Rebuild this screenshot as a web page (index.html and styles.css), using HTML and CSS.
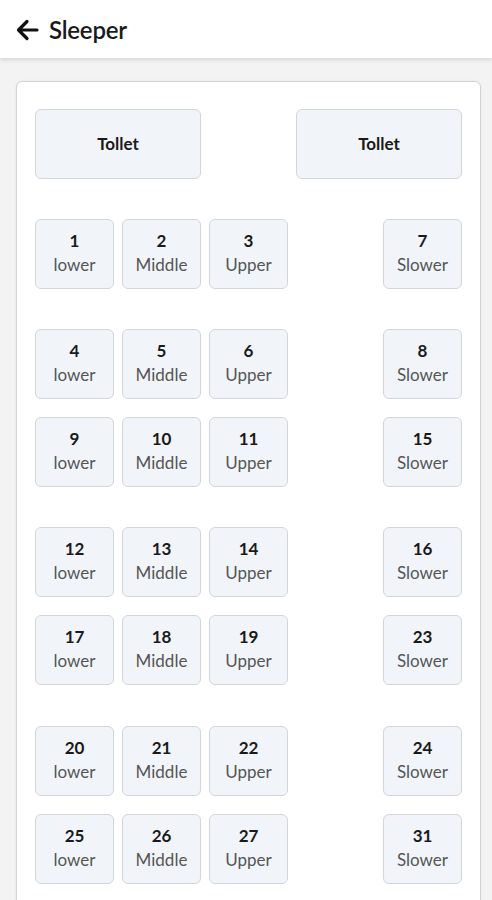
FILE: index.html
```html
<!DOCTYPE html>
<html>
<head>
<meta charset="utf-8">
<link rel="stylesheet" href="styles.css">
</head>
<body>
<header class="topbar">
  <svg class="back" width="24" height="22" viewBox="0 0 24 22"><path d="M22 11H4M12 2.5L3.5 11 12 19.5" fill="none" stroke="#111" stroke-width="3.2" stroke-linecap="round" stroke-linejoin="round"/></svg>
  <h1 class="title">Sleeper</h1>
</header>
<main class="page">
  <section class="card">
    <div class="toilets">
      <div class="box toilet">Tollet</div>
      <div class="box toilet">Tollet</div>
    </div>
    <div class="group">
      <div class="row">
        <div class="box seat"><b>1</b><span>lower</span></div>
        <div class="box seat"><b>2</b><span>Middle</span></div>
        <div class="box seat"><b>3</b><span>Upper</span></div>
        <div class="box seat last"><b>7</b><span>Slower</span></div>
      </div>
    </div>
    <div class="group">
      <div class="row">
        <div class="box seat"><b>4</b><span>lower</span></div>
        <div class="box seat"><b>5</b><span>Middle</span></div>
        <div class="box seat"><b>6</b><span>Upper</span></div>
        <div class="box seat last"><b>8</b><span>Slower</span></div>
      </div>
      <div class="row">
        <div class="box seat"><b>9</b><span>lower</span></div>
        <div class="box seat"><b>10</b><span>Middle</span></div>
        <div class="box seat"><b>11</b><span>Upper</span></div>
        <div class="box seat last"><b>15</b><span>Slower</span></div>
      </div>
    </div>
    <div class="group">
      <div class="row">
        <div class="box seat"><b>12</b><span>lower</span></div>
        <div class="box seat"><b>13</b><span>Middle</span></div>
        <div class="box seat"><b>14</b><span>Upper</span></div>
        <div class="box seat last"><b>16</b><span>Slower</span></div>
      </div>
      <div class="row">
        <div class="box seat"><b>17</b><span>lower</span></div>
        <div class="box seat"><b>18</b><span>Middle</span></div>
        <div class="box seat"><b>19</b><span>Upper</span></div>
        <div class="box seat last"><b>23</b><span>Slower</span></div>
      </div>
    </div>
    <div class="group">
      <div class="row">
        <div class="box seat"><b>20</b><span>lower</span></div>
        <div class="box seat"><b>21</b><span>Middle</span></div>
        <div class="box seat"><b>22</b><span>Upper</span></div>
        <div class="box seat last"><b>24</b><span>Slower</span></div>
      </div>
      <div class="row">
        <div class="box seat"><b>25</b><span>lower</span></div>
        <div class="box seat"><b>26</b><span>Middle</span></div>
        <div class="box seat"><b>27</b><span>Upper</span></div>
        <div class="box seat last"><b>31</b><span>Slower</span></div>
      </div>
    </div>
  </section>
</main>
</body>
</html>
```
FILE: styles.css
```css
* { box-sizing: border-box; }
html, body { margin: 0; padding: 0; }
body {
  background: #f3f3f3;
  font-family: Lato, "Open Sans", "Liberation Sans", sans-serif;
  color: #222;
  width: 492px;
  height: 900px;
  overflow: hidden;
}
.topbar {
  height: 58px;
  background: #fff;
  display: flex;
  align-items: center;
  padding-left: 15px;
  gap: 10px;
  box-shadow: 0 2px 4px rgba(0,0,0,0.12);
  position: relative;
  z-index: 1;
}
.back { display: block; margin-top: 1px; }
.title {
  margin: 0;
  font-size: 24px;
  font-weight: 600;
  color: #1a1a1a;
  letter-spacing: -0.2px;
}
.page {
  padding: 23px 11px 0 16px;
}
.card {
  background: #fff;
  border: 1px solid #d3d3d3;
  border-radius: 6px;
  padding: 27px 18px 40px 18px;
  box-shadow: 0 0 3px rgba(0,0,0,0.06);
}
.box {
  background: #f1f5fa;
  border: 1.5px solid #d2d5d9;
  border-radius: 6px;
  display: flex;
  flex-direction: column;
  align-items: center;
  justify-content: center;
}
.toilets {
  display: flex;
  justify-content: space-between;
  margin-bottom: 40px;
}
.toilet {
  width: 166px;
  height: 70px;
  font-weight: 700;
  font-size: 17px;
  color: #1a1a1a;
  padding-bottom: 1px;
}
.group {
  display: flex;
  flex-direction: column;
  gap: 18px;
  margin-bottom: 40px;
}
.group:nth-child(4) { margin-bottom: 41px; }
.row {
  display: grid;
  grid-template-columns: 79px 79px 79px 1fr 79px;
  column-gap: 8px;
}
.seat {
  height: 70px;
  line-height: 24px;
  padding-bottom: 3px;
}
.seat.last { grid-column: 5; }
.seat b {
  font-weight: 700;
  font-size: 17px;
  color: #1a1a1a;
}
.seat span {
  font-size: 17px;
  color: #555;
}
```
